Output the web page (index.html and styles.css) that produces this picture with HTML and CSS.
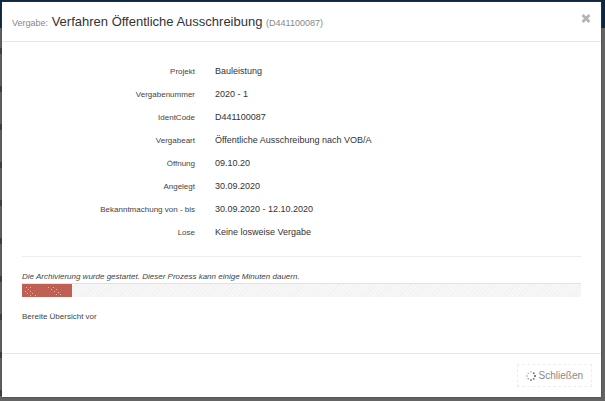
FILE: index.html
```html
<!DOCTYPE html>
<html lang="de">
<head>
<meta charset="utf-8">
<title>Vergabe</title>
<link rel="stylesheet" href="styles.css">
</head>
<body>
<main class="modal" role="dialog" aria-labelledby="title">
  <header class="modal-header">
    <h1 class="title" id="title"><small>Vergabe:</small> Verfahren Öffentliche Ausschreibung <small>(D441100087)</small></h1>
    <button class="close" type="button" aria-label="Schließen">
      <svg width="10" height="12" viewBox="0 0 10 12"><path d="M1.5 3 8.5 10M8.5 3 1.5 10" stroke="#b4b4b4" stroke-width="2.8"/></svg>
    </button>
  </header>
  <section class="modal-body">
    <dl class="details">
      <dt>Projekt</dt><dd>Bauleistung</dd>
      <dt>Vergabenummer</dt><dd>2020 - 1</dd>
      <dt>IdentCode</dt><dd>D441100087</dd>
      <dt>Vergabeart</dt><dd>Öffentliche Ausschreibung nach VOB/A</dd>
      <dt>Öffnung</dt><dd>09.10.20</dd>
      <dt>Angelegt</dt><dd>30.09.2020</dd>
      <dt>Bekanntmachung von - bis</dt><dd>30.09.2020 - 12.10.2020</dd>
      <dt>Lose</dt><dd>Keine losweise Vergabe</dd>
    </dl>
    <hr class="rule">
    <p class="hint">Die Archivierung wurde gestartet. Dieser Prozess kann einige Minuten dauern.</p>
    <div class="progress" role="progressbar" aria-valuenow="9" aria-valuemin="0" aria-valuemax="100" aria-label="Archivierung">
      <div class="bar" style="width: 9%">
        <svg width="50" height="13" viewBox="0 0 50 13" fill="#e3b5ae"><path d="M4 3h1v1H4zM8 3h1v1H8zM6 5h1v1H6zM3 7h1v1H3zM8 7h1v1H8zM5 9h1v1H5zM10 9h1v1h-1zM13 11h1v1h-1zM8 11h1v1H8zM26 3h1v1h-1zM31 3h1v1h-1zM29 5h1v1h-1zM34 5h1v1h-1zM32 7h1v1h-1zM36 8h1v1h-1zM34 10h1v1h-1zM38 10h1v1h-1z"/></svg>
      </div>
    </div>
    <p class="status">Bereite Übersicht vor</p>
  </section>
  <footer class="modal-footer">
    <button class="button" type="button">
      <svg width="10" height="10" viewBox="0 0 10 10"><circle cx="5" cy="1" r=".8" fill="#aaa"/><circle cx="7.8" cy="2.2" r="1" fill="#777"/><circle cx="9" cy="5" r="1" fill="#555"/><circle cx="7.8" cy="7.8" r=".9" fill="#666"/><circle cx="5" cy="9" r=".9" fill="#777"/><circle cx="2.2" cy="7.8" r=".8" fill="#888"/><circle cx="1" cy="5" r=".8" fill="#999"/><circle cx="2.2" cy="2.2" r=".7" fill="#aaa"/></svg>
      Schließen
    </button>
  </footer>
</main>
</body>
</html>
```
FILE: styles.css
```css
* {
  box-sizing: border-box;
}

body {
  margin: 0;
  min-height: 100vh;
  padding: 2px 4px 4px 2px;
  display: flex;
  background:
    linear-gradient(#0b2840 28px, transparent 28px),
    repeating-linear-gradient(transparent 0 10px, #404040 10px 16px, transparent 16px 38px) left / 2px 100% no-repeat,
    #646464;
  font-family: "Liberation Sans", Arial, sans-serif;
  font-size: 8px;
  color: #444;
}

.modal {
  flex: 1;
  display: flex;
  flex-direction: column;
  background: #fff;
  box-shadow: 0 0 2px #404040;
}

.modal-header {
  display: flex;
  justify-content: space-between;
  align-items: flex-start;
  padding: 10px;
  border-bottom: 1px solid #e8e8e8;
}

.title {
  margin: 0;
  font-size: 13px;
  line-height: 19px;
  font-weight: normal;
  color: #333;
}

.title small {
  font-size: 9px;
  line-height: 12px;
  color: #888;
}

.close {
  display: flex;
  padding: 0;
  border: 0;
  background: none;
}

.modal-body {
  flex: 1;
  padding: 18px 20px;
}

.details {
  display: grid;
  grid-template-columns: 173px 1fr;
  column-gap: 20px;
  margin: 0;
  line-height: 23px;
}

.details dt {
  text-align: right;
}

.details dd {
  margin: 0;
  font-size: 9px;
  color: #333;
}

.rule {
  margin: 12px 0 14px;
  border: 0;
  border-top: 1px solid #eee;
}

.hint,
.status {
  margin: 0;
  line-height: 12px;
}

.hint {
  font-style: italic;
}

.progress {
  height: 14px;
  background: repeating-linear-gradient(135deg, #f7f7f7 0 2px, #f2f2f2 2px 3px);
  border-top: 1px solid #e2e2e2;
}

.bar {
  height: 13px;
  overflow: hidden;
  background: #c05f53;
}

.status {
  margin-top: 14px;
}

.modal-footer {
  display: flex;
  justify-content: flex-end;
  padding: 10px 9px;
  border-top: 1px solid #e8e8e8;
}

.button {
  display: flex;
  align-items: center;
  gap: 3px;
  padding: 4px 8px;
  border: 1px dashed #eee;
  background: #fff;
  font: 10px/13px "Liberation Sans", Arial, sans-serif;
  color: #888;
}
```
